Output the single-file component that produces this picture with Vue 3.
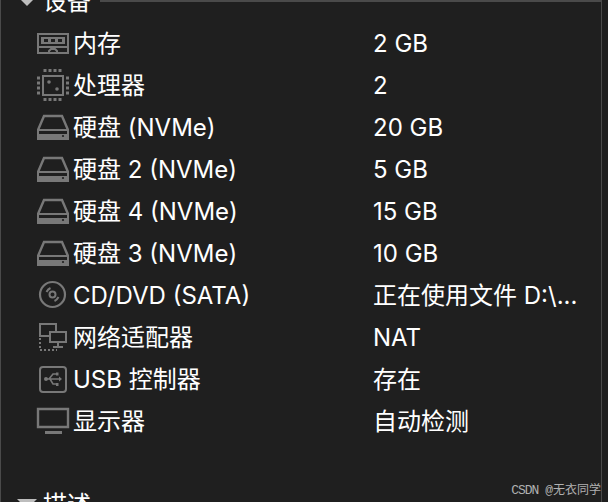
<template>
  <div class="panel">
    <div class="section-head first">
      <span class="arrow"></span>
      <span class="section-title">设备</span>
      <span class="rule"></span>
    </div>

    <div v-for="d in devices" :key="d.name" class="row">
      <span class="icon">
        <svg width="34" height="34" viewBox="0 0 34 34" fill="none" stroke="#787878" stroke-width="2">
          <template v-if="d.icon === 'ram'">
            <path d="M2 8h30v19H2z" />
            <path d="M2 21h30" />
            <path d="M5 11h24v7H5z" fill="#787878" stroke="none" />
            <path d="M8 13h4v3H8zM15 13h4v3h-4zM22 13h4v3h-4z" fill="#1f1f1f" stroke="none" />
            <path d="M13 27v-2l2-2h4l2 2v2" />
          </template>
          <template v-else-if="d.icon === 'cpu'">
            <path d="M7 8h20v19H7z" />
            <circle cx="13" cy="14" r="1.8" fill="#787878" stroke="none" />
            <circle cx="21" cy="21" r="1.8" fill="#787878" stroke="none" />
            <path stroke-width="3" d="M9 1v3M14 1v3M19 1v3M24 1v3M9 30v3M14 30v3M19 30v3M24 30v3M1 10h3M1 15h3M1 20h3M1 25h3M30 10h3M30 15h3M30 20h3M30 25h3" />
          </template>
          <template v-else-if="d.icon === 'disk'">
            <path d="M2 20 8 6h18l6 14" stroke-width="2.400" />
            <path d="M2 20h30v9H2z" />
            <path d="M3 24h28v4H3z" fill="#787878" stroke="none" />
            <circle cx="27" cy="26" r="1.1" fill="#1f1f1f" stroke="none" />
          </template>
          <template v-else-if="d.icon === 'cd'">
            <circle cx="16.500" cy="16.500" r="12.500" stroke-width="2.200" />
            <circle cx="16.500" cy="16.500" r="3" />
            <path d="M10.500 14c1-2 2-3 4-4M22.500 19c-1 2-2 3-4 4" />
          </template>
          <template v-else-if="d.icon === 'net'">
            <path d="M4 4h16v12H4z" />
            <path d="M14 12h16v10H14z" fill="#1f1f1f" />
            <path d="M22 22v4M17 27h10" />
            <path d="M4 18v12h17" stroke-dasharray="2 2" />
          </template>
          <template v-else-if="d.icon === 'usb'">
            <rect x="4" y="5" width="26" height="25" rx="3" />
            <path stroke-width="1.600" d="M9 17h15M13 17l4-5h3M14 17l3 5h3" />
            <circle cx="10" cy="17" r="2" fill="#787878" stroke="none" />
            <path d="M23 14.500v5l3-2.500z" fill="#787878" stroke="none" />
            <path d="M20 10.500h2.500v3H20zM20 21h2.500v3H20z" fill="#787878" stroke="none" />
          </template>
          <template v-else>
            <path d="M2 5h30v18H2z" stroke-width="2.400" />
            <path d="M9 27h17v3H9z" fill="#787878" stroke="none" />
          </template>
        </svg>
      </span>
      <span class="name">{{ d.name }}</span>
      <span class="value">{{ d.value }}</span>
    </div>

    <div class="section-head last">
      <span class="arrow"></span>
      <span class="section-title">描述</span>
    </div>

    <div class="watermark"><span class="mark-latin">CSDN @</span>无衣同学</div>
  </div>
</template>

<script setup>
const devices = [
  { icon: 'ram', name: '内存', value: '2 GB' },
  { icon: 'cpu', name: '处理器', value: '2' },
  { icon: 'disk', name: '硬盘 (NVMe)', value: '20 GB' },
  { icon: 'disk', name: '硬盘 2 (NVMe)', value: '5 GB' },
  { icon: 'disk', name: '硬盘 4 (NVMe)', value: '15 GB' },
  { icon: 'disk', name: '硬盘 3 (NVMe)', value: '10 GB' },
  { icon: 'cd', name: 'CD/DVD (SATA)', value: '正在使用文件 D:\\...' },
  { icon: 'net', name: '网络适配器', value: 'NAT' },
  { icon: 'usb', name: 'USB 控制器', value: '存在' },
  { icon: 'monitor', name: '显示器', value: '自动检测' }
]
</script>

<style>
html, body { background: #1f1f1f; overflow: hidden; }
</style>

<style scoped>
.panel {
  position: relative;
  width: 608px;
  height: 502px;
  box-sizing: border-box;
  overflow: hidden;
  background: #1f1f1f;
  border-left: 1px solid #4a4a4a;
  color: #fff;
  font-family: Inter, "Noto Sans CJK SC", sans-serif;
  font-size: 24px;
  line-height: 42px;
}
.panel::after {
  content: '';
  position: absolute;
  top: 0;
  bottom: 0;
  left: 600px;
  width: 1px;
  background: #4a4a4a;
}
.section-head {
  display: flex;
  align-items: center;
  height: 42px;
  padding-left: 16px;
}
.section-head.first { margin-top: -20px; }
.section-head.last { margin-top: 41px; }
.arrow {
  flex: none;
  width: 0;
  height: 0;
  margin-right: 6px;
  border-left: 10px solid transparent;
  border-right: 10px solid transparent;
  border-top: 10px solid #bdbdbd;
}
.section-title { padding-top: 2px; }
.rule {
  flex: 1;
  height: 2px;
  margin: 0 7px 0 9px;
  background: #4a4a4a;
}
.row {
  display: flex;
  align-items: center;
  height: 42px;
  padding-left: 35px;
}
.icon {
  display: flex;
  width: 34px;
  height: 34px;
  margin-right: 3px;
}
.name { width: 300px; padding-top: 2px; white-space: nowrap; }
.value { padding-top: 2px; white-space: nowrap; }
.watermark {
  position: absolute;
  right: 7px;
  bottom: 1px;
  font-size: 12px;
  line-height: 20px;
  color: #b0b0b0;
}
.mark-latin {
  margin-right: 1px;
  font-family: "Liberation Mono", monospace;
  font-size: 13px;
  letter-spacing: -1px;
}
</style>
